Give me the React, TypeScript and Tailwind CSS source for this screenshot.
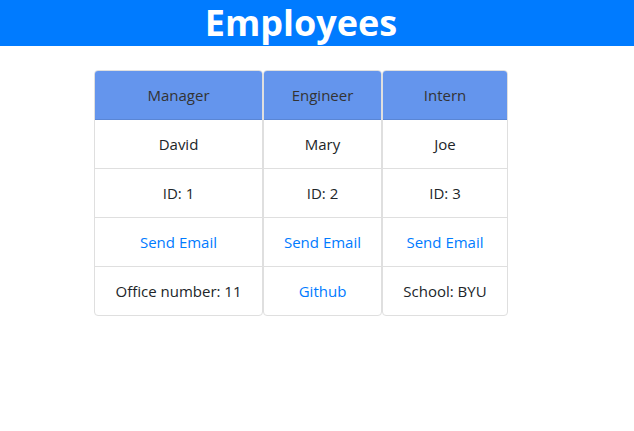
const cards = [
  { role: 'Manager', name: 'David', id: 1, extra: 'Office number: 11', link: false, width: 'w-[169px]' },
  { role: 'Engineer', name: 'Mary', id: 2, extra: 'Github', link: true, width: 'w-[119px]' },
  { role: 'Intern', name: 'Joe', id: 3, extra: 'School: BYU', link: false, width: 'w-[126px]' },
];

export default function App() {
  return (
    <div className="min-h-[431px] bg-white font-['Open_Sans',sans-serif] text-[#212529]">
      <header className="h-[46px] bg-[#007bff] pr-[32px] text-center">
        <h1 className="text-[36px] font-bold leading-[46px] text-white">Employees</h1>
      </header>

      <div className="ml-[94px] mt-[24px] flex">
        {cards.map((c) => (
          <div
            key={c.id}
            className={`${c.width} overflow-hidden rounded-[4px] border border-[#dfdfdf] text-center text-[15px]`}
          >
            <div className="flex h-[49px] items-center justify-center border-b border-[#5a86d5] bg-[#6495ed] text-[#333]">
              {c.role}
            </div>
            <div className="flex h-[49px] items-center justify-center border-b border-[#dfdfdf]">{c.name}</div>
            <div className="flex h-[49px] items-center justify-center border-b border-[#dfdfdf]">ID: {c.id}</div>
            <div className="flex h-[49px] items-center justify-center border-b border-[#dfdfdf]">
              <a href="#" className="text-[#007bff]">Send Email</a>
            </div>
            <div className="flex h-[48px] items-center justify-center">
              {c.link ? <a href="#" className="text-[#007bff]">{c.extra}</a> : c.extra}
            </div>
          </div>
        ))}
      </div>
    </div>
  );
}
